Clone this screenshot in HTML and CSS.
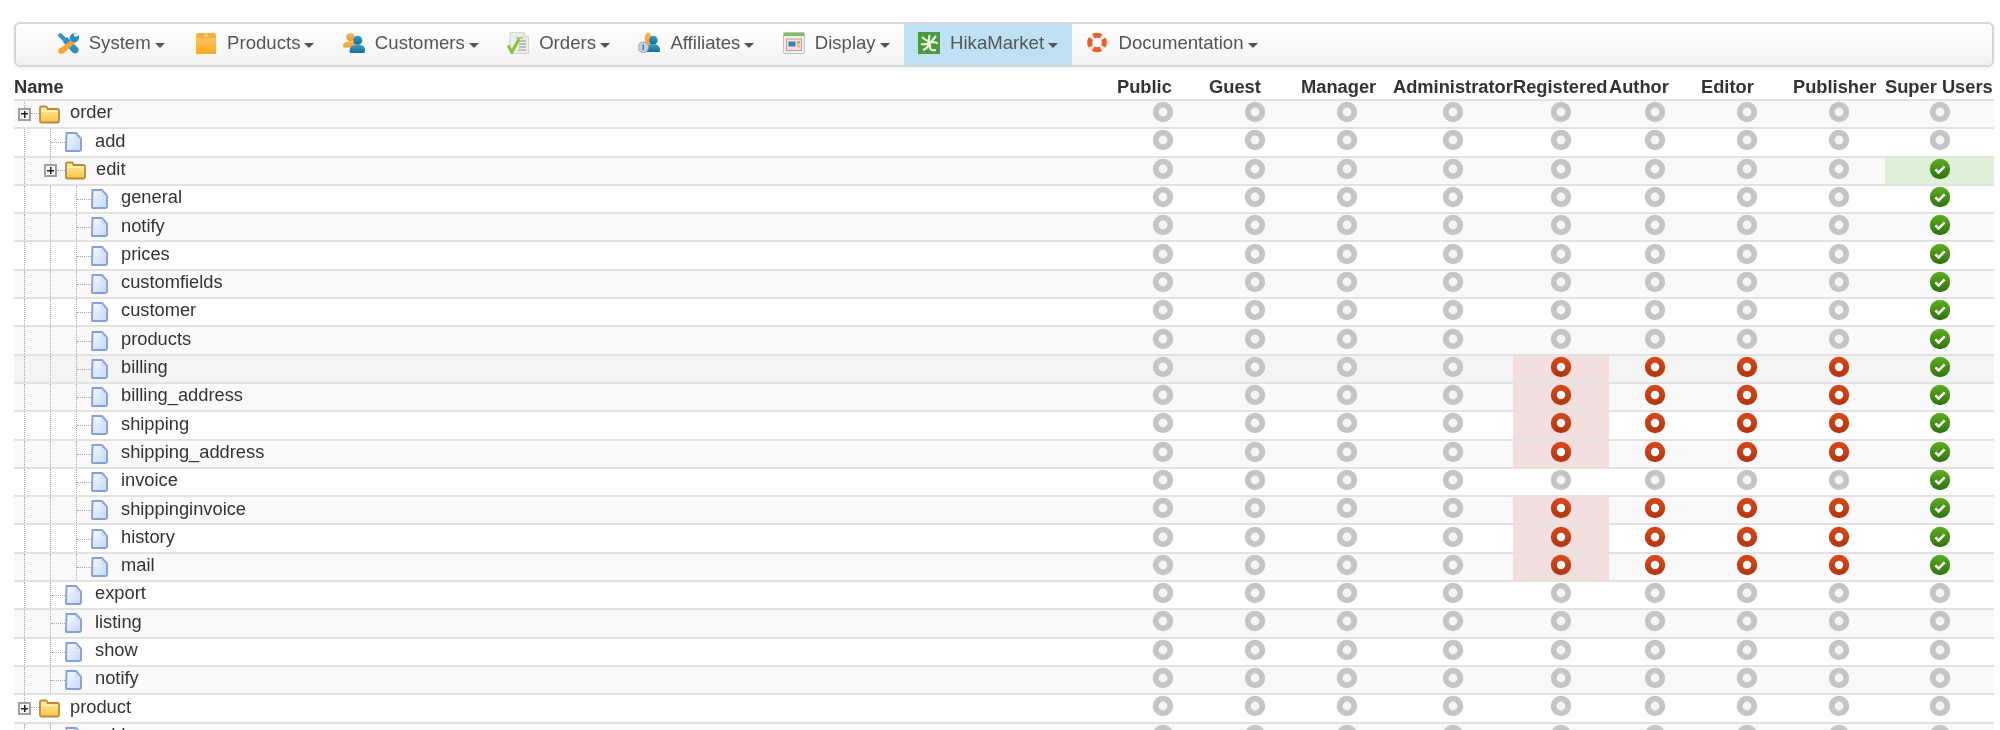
FILE: index.html
```html
<!DOCTYPE html>
<html lang="en">
<head>
<meta charset="utf-8">
<title>HikaMarket ACL</title>
<link rel="stylesheet" href="styles.css">
</head>
<body>
<svg class="defs" aria-hidden="true">
  <defs>
    <linearGradient id="gf" x1="0" y1="0" x2="0" y2="1"><stop offset="0" stop-color="#ffefa8"/><stop offset="1" stop-color="#f9c543"/></linearGradient>
    <linearGradient id="gp" x1="0" y1="0" x2="1" y2="1"><stop offset="0" stop-color="#f8fbff"/><stop offset="1" stop-color="#c3d7f5"/></linearGradient>
    <linearGradient id="gb" x1="0" y1="0" x2="0" y2="1"><stop offset="0" stop-color="#fdc35c"/><stop offset="1" stop-color="#fba81f"/></linearGradient>
    <linearGradient id="gg" x1="0" y1="0" x2="0" y2="1"><stop offset="0" stop-color="#5fae1f"/><stop offset="1" stop-color="#2f7010"/></linearGradient>
    <linearGradient id="gr" x1="0" y1="0" x2="0" y2="1"><stop offset="0" stop-color="#d3461a"/><stop offset="1" stop-color="#b53812"/></linearGradient>
    <linearGradient id="gu" x1="0" y1="0" x2="0" y2="1"><stop offset="0" stop-color="#3aa0c8"/><stop offset="1" stop-color="#17698f"/></linearGradient>
    <linearGradient id="go" x1="0" y1="0" x2="0" y2="1"><stop offset="0" stop-color="#fcb860"/><stop offset="1" stop-color="#f59a2a"/></linearGradient>
    <symbol id="off" viewBox="0 0 22 22"><circle cx="11" cy="11" r="4.500" fill="#f5f5f5"/><circle cx="11" cy="11" r="7.300" fill="none" stroke="#c5c5c5" stroke-width="5.800"/></symbol>
    <symbol id="deny" viewBox="0 0 22 22"><circle cx="11" cy="11" r="4.200" fill="#fff"/><circle cx="11" cy="11" r="7.200" fill="none" stroke="url(#gr)" stroke-width="6"/></symbol>
    <symbol id="ok" viewBox="0 0 22 22"><circle cx="11" cy="11" r="10.200" fill="url(#gg)"/><path d="M6.400 11.300l3.200 3.200 6-6.200" fill="none" stroke="#fff" stroke-width="2.500"/></symbol>
    <symbol id="folder" viewBox="0 0 21 19"><path d="M1 5V3q0-1.500 1.500-1.500h4q1 0 1.500 1l.8 1.500h9.700q1.500 0 1.500 1.500v10.500q0 1.500-1.500 1.500H2.500Q1 17.500 1 16z" fill="url(#gf)" stroke="#bb8a34" stroke-width="1.800"/><path d="M2 6.300h17" stroke="#fff6cc" stroke-width="1"/></symbol>
    <symbol id="page" viewBox="0 0 17 20"><path d="M1.500 1h9.500l5 5.500v11q0 1.500-1.500 1.500h-13Q1 19 1 17.500z" fill="url(#gp)" stroke="#86a0d4" stroke-width="1.900"/><path d="M11 1.500v5h4.600" fill="none" stroke="#c0d0ee" stroke-width=".7"/></symbol>
  </defs>
</svg>

<nav class="menu">
  <a class="item">
    <svg class="ico" viewBox="0 0 22 22"><path d="M4 1l6 6-3 3-6-6q0-3 3-3z" fill="#3a93c4"/><path d="M7 7l3-2 11 11q1.500 3-.5 4.500t-4.500.5L6 10z" fill="#2f8fbf"/><path d="M16 7l3 3L7 21q-3 2-5 0t0-4z" fill="#f4a63a"/><path d="M21 2q-6-2-8 2-1 3 1 5t5 1q4-2 3-7l-3 2-2-1v-2z" fill="#2f8fbf"/></svg>
    <span>System</span><i class="caret"></i>
  </a>
  <a class="item">
    <svg class="ico" viewBox="0 0 22 22"><path d="M1 5q0-4 2-4h16q2 0 2 4v2H1z" fill="#f9ac42"/><path d="M9.500 1h3l.5 4H9z" fill="#fdc76c"/><path d="M1 6h20v15q0 1-1 1H2q-1 0-1-1z" fill="url(#gb)"/></svg>
    <span>Products</span><i class="caret"></i>
  </a>
  <a class="item">
    <svg class="ico" viewBox="0 0 24 22"><circle cx="8" cy="4.500" r="4.500" fill="url(#go)"/><path d="M0 14q0-5 8-5 4 0 6 2v5H1q-1 0-1-2z" fill="url(#go)"/><circle cx="16" cy="8" r="5" fill="url(#gu)"/><path d="M7 20q0-7 9-7t8 7q0 2-1.500 2h-14Q7 22 7 20z" fill="url(#gu)"/></svg>
    <span>Customers</span><i class="caret"></i>
  </a>
  <a class="item">
    <svg class="ico" viewBox="0 0 22 22"><path d="M3 .5h14l4.500 4.500v16.500H3z" fill="#ebede7" stroke="#d2d5cf"/><path d="M17 .5V5h4.500" fill="#f7f8f5" stroke="#c8ccc4"/><path d="M9 6h7M10 9h9M12 12h7M12 15h7M11 18h8" stroke="#adb3aa" stroke-width="1.300"/><path d="M1 13.500l4 6.500 7-13" fill="none" stroke="#8fc23c" stroke-width="3.200"/></svg>
    <span>Orders</span><i class="caret"></i>
  </a>
  <a class="item">
    <svg class="ico" viewBox="0 0 23 22"><path d="M7 6q0-6 4-6 3 0 3 6v10H7z" fill="url(#go)"/><circle cx="16" cy="8" r="4.500" fill="url(#gu)"/><path d="M9 19q0-7 7-7t7 7q0 1.500-1 1.500H10q-1 0-1-1.500z" fill="url(#gu)"/><circle cx="5.500" cy="15.500" r="5.500" fill="#c3d4de" stroke="#8fa7b5"/><path d="M5.500 12.500v6" stroke="#4c7d9b" stroke-width="1.600"/></svg>
    <span>Affiliates</span><i class="caret"></i>
  </a>
  <a class="item">
    <svg class="ico" viewBox="0 0 22 22"><rect x=".5" y=".5" width="21" height="21" rx="1" fill="#eaf0ee" stroke="#b9c4c4"/><rect x="1" y="1" width="20" height="3" fill="#7cc05e"/><rect x="3.500" y="7" width="15" height="11.500" fill="#f6dcdc" stroke="#e28f8f"/><rect x="5.500" y="9.500" width="7" height="5" fill="#2c86bb"/><rect x="14" y="9" width="3" height="3" fill="#f4a53a"/><rect x="14" y="13" width="3" height="2.500" fill="#e9c34a"/></svg>
    <span>Display</span><i class="caret"></i>
  </a>
  <a class="item active">
    <svg class="ico" viewBox="0 0 22 22"><rect width="22" height="23" fill="#4c9a3f"/><path d="M11.500 3q-1 5-.5 9M4 5q3 3 6 4M18 4l-5 6M3 12q4 1 8-1M11 12q-2 5-6 6M12 10q8 0 7 2M12 11v5q1 3 6 2" fill="none" stroke="#eaf5df" stroke-width="2.100"/></svg>
    <span>HikaMarket</span><i class="caret"></i>
  </a>
  <a class="item">
    <svg class="ico" viewBox="0 0 22 22"><circle cx="11" cy="10.500" r="7.300" fill="#fff" stroke="#f3e4da" stroke-width="5"/><circle cx="11" cy="10.500" r="7.300" fill="none" stroke="#e8602a" stroke-width="5" stroke-dasharray="8 3.470" stroke-dashoffset="4"/></svg>
    <span>Documentation</span><i class="caret"></i>
  </a>
</nav>

<table class="acl">
  <colgroup>
    <col class="c-name"><col class="c-92"><col class="c-92"><col class="c-92"><col class="c-120"><col class="c-96"><col class="c-92"><col class="c-92"><col class="c-92"><col class="c-su">
  </colgroup>
  <thead>
    <tr><th>Name</th><th>Public</th><th>Guest</th><th>Manager</th><th>Administrator</th><th>Registered</th><th>Author</th><th>Editor</th><th>Publisher</th><th>Super Users</th></tr>
  </thead>
  <tbody>
    <tr><td><div class="node"><span class="tg"></span><svg class="fo"><use href="#folder"/></svg><span>order</span></div></td><td><svg class="st"><use href="#off"/></svg></td><td><svg class="st"><use href="#off"/></svg></td><td><svg class="st"><use href="#off"/></svg></td><td><svg class="st"><use href="#off"/></svg></td><td><svg class="st"><use href="#off"/></svg></td><td><svg class="st"><use href="#off"/></svg></td><td><svg class="st"><use href="#off"/></svg></td><td><svg class="st"><use href="#off"/></svg></td><td><svg class="st"><use href="#off"/></svg></td></tr>
    <tr><td><div class="node"><span class="g"></span><span class="j"></span><svg class="pg"><use href="#page"/></svg><span>add</span></div></td><td><svg class="st"><use href="#off"/></svg></td><td><svg class="st"><use href="#off"/></svg></td><td><svg class="st"><use href="#off"/></svg></td><td><svg class="st"><use href="#off"/></svg></td><td><svg class="st"><use href="#off"/></svg></td><td><svg class="st"><use href="#off"/></svg></td><td><svg class="st"><use href="#off"/></svg></td><td><svg class="st"><use href="#off"/></svg></td><td><svg class="st"><use href="#off"/></svg></td></tr>
    <tr><td><div class="node"><span class="g"></span><span class="tg"></span><svg class="fo"><use href="#folder"/></svg><span>edit</span></div></td><td><svg class="st"><use href="#off"/></svg></td><td><svg class="st"><use href="#off"/></svg></td><td><svg class="st"><use href="#off"/></svg></td><td><svg class="st"><use href="#off"/></svg></td><td><svg class="st"><use href="#off"/></svg></td><td><svg class="st"><use href="#off"/></svg></td><td><svg class="st"><use href="#off"/></svg></td><td><svg class="st"><use href="#off"/></svg></td><td class="allow"><svg class="st"><use href="#ok"/></svg></td></tr>
    <tr><td><div class="node"><span class="g"></span><span class="g"></span><span class="j"></span><svg class="pg"><use href="#page"/></svg><span>general</span></div></td><td><svg class="st"><use href="#off"/></svg></td><td><svg class="st"><use href="#off"/></svg></td><td><svg class="st"><use href="#off"/></svg></td><td><svg class="st"><use href="#off"/></svg></td><td><svg class="st"><use href="#off"/></svg></td><td><svg class="st"><use href="#off"/></svg></td><td><svg class="st"><use href="#off"/></svg></td><td><svg class="st"><use href="#off"/></svg></td><td><svg class="st"><use href="#ok"/></svg></td></tr>
    <tr><td><div class="node"><span class="g"></span><span class="g"></span><span class="j"></span><svg class="pg"><use href="#page"/></svg><span>notify</span></div></td><td><svg class="st"><use href="#off"/></svg></td><td><svg class="st"><use href="#off"/></svg></td><td><svg class="st"><use href="#off"/></svg></td><td><svg class="st"><use href="#off"/></svg></td><td><svg class="st"><use href="#off"/></svg></td><td><svg class="st"><use href="#off"/></svg></td><td><svg class="st"><use href="#off"/></svg></td><td><svg class="st"><use href="#off"/></svg></td><td><svg class="st"><use href="#ok"/></svg></td></tr>
    <tr><td><div class="node"><span class="g"></span><span class="g"></span><span class="j"></span><svg class="pg"><use href="#page"/></svg><span>prices</span></div></td><td><svg class="st"><use href="#off"/></svg></td><td><svg class="st"><use href="#off"/></svg></td><td><svg class="st"><use href="#off"/></svg></td><td><svg class="st"><use href="#off"/></svg></td><td><svg class="st"><use href="#off"/></svg></td><td><svg class="st"><use href="#off"/></svg></td><td><svg class="st"><use href="#off"/></svg></td><td><svg class="st"><use href="#off"/></svg></td><td><svg class="st"><use href="#ok"/></svg></td></tr>
    <tr><td><div class="node"><span class="g"></span><span class="g"></span><span class="j"></span><svg class="pg"><use href="#page"/></svg><span>customfields</span></div></td><td><svg class="st"><use href="#off"/></svg></td><td><svg class="st"><use href="#off"/></svg></td><td><svg class="st"><use href="#off"/></svg></td><td><svg class="st"><use href="#off"/></svg></td><td><svg class="st"><use href="#off"/></svg></td><td><svg class="st"><use href="#off"/></svg></td><td><svg class="st"><use href="#off"/></svg></td><td><svg class="st"><use href="#off"/></svg></td><td><svg class="st"><use href="#ok"/></svg></td></tr>
    <tr><td><div class="node"><span class="g"></span><span class="g"></span><span class="j"></span><svg class="pg"><use href="#page"/></svg><span>customer</span></div></td><td><svg class="st"><use href="#off"/></svg></td><td><svg class="st"><use href="#off"/></svg></td><td><svg class="st"><use href="#off"/></svg></td><td><svg class="st"><use href="#off"/></svg></td><td><svg class="st"><use href="#off"/></svg></td><td><svg class="st"><use href="#off"/></svg></td><td><svg class="st"><use href="#off"/></svg></td><td><svg class="st"><use href="#off"/></svg></td><td><svg class="st"><use href="#ok"/></svg></td></tr>
    <tr><td><div class="node"><span class="g"></span><span class="g"></span><span class="j"></span><svg class="pg"><use href="#page"/></svg><span>products</span></div></td><td><svg class="st"><use href="#off"/></svg></td><td><svg class="st"><use href="#off"/></svg></td><td><svg class="st"><use href="#off"/></svg></td><td><svg class="st"><use href="#off"/></svg></td><td><svg class="st"><use href="#off"/></svg></td><td><svg class="st"><use href="#off"/></svg></td><td><svg class="st"><use href="#off"/></svg></td><td><svg class="st"><use href="#off"/></svg></td><td><svg class="st"><use href="#ok"/></svg></td></tr>
    <tr class="hover"><td><div class="node"><span class="g"></span><span class="g"></span><span class="j"></span><svg class="pg"><use href="#page"/></svg><span>billing</span></div></td><td><svg class="st"><use href="#off"/></svg></td><td><svg class="st"><use href="#off"/></svg></td><td><svg class="st"><use href="#off"/></svg></td><td><svg class="st"><use href="#off"/></svg></td><td class="denied"><svg class="st"><use href="#deny"/></svg></td><td><svg class="st"><use href="#deny"/></svg></td><td><svg class="st"><use href="#deny"/></svg></td><td><svg class="st"><use href="#deny"/></svg></td><td><svg class="st"><use href="#ok"/></svg></td></tr>
    <tr><td><div class="node"><span class="g"></span><span class="g"></span><span class="j"></span><svg class="pg"><use href="#page"/></svg><span>billing_address</span></div></td><td><svg class="st"><use href="#off"/></svg></td><td><svg class="st"><use href="#off"/></svg></td><td><svg class="st"><use href="#off"/></svg></td><td><svg class="st"><use href="#off"/></svg></td><td class="denied"><svg class="st"><use href="#deny"/></svg></td><td><svg class="st"><use href="#deny"/></svg></td><td><svg class="st"><use href="#deny"/></svg></td><td><svg class="st"><use href="#deny"/></svg></td><td><svg class="st"><use href="#ok"/></svg></td></tr>
    <tr><td><div class="node"><span class="g"></span><span class="g"></span><span class="j"></span><svg class="pg"><use href="#page"/></svg><span>shipping</span></div></td><td><svg class="st"><use href="#off"/></svg></td><td><svg class="st"><use href="#off"/></svg></td><td><svg class="st"><use href="#off"/></svg></td><td><svg class="st"><use href="#off"/></svg></td><td class="denied"><svg class="st"><use href="#deny"/></svg></td><td><svg class="st"><use href="#deny"/></svg></td><td><svg class="st"><use href="#deny"/></svg></td><td><svg class="st"><use href="#deny"/></svg></td><td><svg class="st"><use href="#ok"/></svg></td></tr>
    <tr><td><div class="node"><span class="g"></span><span class="g"></span><span class="j"></span><svg class="pg"><use href="#page"/></svg><span>shipping_address</span></div></td><td><svg class="st"><use href="#off"/></svg></td><td><svg class="st"><use href="#off"/></svg></td><td><svg class="st"><use href="#off"/></svg></td><td><svg class="st"><use href="#off"/></svg></td><td class="denied"><svg class="st"><use href="#deny"/></svg></td><td><svg class="st"><use href="#deny"/></svg></td><td><svg class="st"><use href="#deny"/></svg></td><td><svg class="st"><use href="#deny"/></svg></td><td><svg class="st"><use href="#ok"/></svg></td></tr>
    <tr><td><div class="node"><span class="g"></span><span class="g"></span><span class="j"></span><svg class="pg"><use href="#page"/></svg><span>invoice</span></div></td><td><svg class="st"><use href="#off"/></svg></td><td><svg class="st"><use href="#off"/></svg></td><td><svg class="st"><use href="#off"/></svg></td><td><svg class="st"><use href="#off"/></svg></td><td><svg class="st"><use href="#off"/></svg></td><td><svg class="st"><use href="#off"/></svg></td><td><svg class="st"><use href="#off"/></svg></td><td><svg class="st"><use href="#off"/></svg></td><td><svg class="st"><use href="#ok"/></svg></td></tr>
    <tr><td><div class="node"><span class="g"></span><span class="g"></span><span class="j"></span><svg class="pg"><use href="#page"/></svg><span>shippinginvoice</span></div></td><td><svg class="st"><use href="#off"/></svg></td><td><svg class="st"><use href="#off"/></svg></td><td><svg class="st"><use href="#off"/></svg></td><td><svg class="st"><use href="#off"/></svg></td><td class="denied"><svg class="st"><use href="#deny"/></svg></td><td><svg class="st"><use href="#deny"/></svg></td><td><svg class="st"><use href="#deny"/></svg></td><td><svg class="st"><use href="#deny"/></svg></td><td><svg class="st"><use href="#ok"/></svg></td></tr>
    <tr><td><div class="node"><span class="g"></span><span class="g"></span><span class="j"></span><svg class="pg"><use href="#page"/></svg><span>history</span></div></td><td><svg class="st"><use href="#off"/></svg></td><td><svg class="st"><use href="#off"/></svg></td><td><svg class="st"><use href="#off"/></svg></td><td><svg class="st"><use href="#off"/></svg></td><td class="denied"><svg class="st"><use href="#deny"/></svg></td><td><svg class="st"><use href="#deny"/></svg></td><td><svg class="st"><use href="#deny"/></svg></td><td><svg class="st"><use href="#deny"/></svg></td><td><svg class="st"><use href="#ok"/></svg></td></tr>
    <tr><td><div class="node"><span class="g"></span><span class="g"></span><span class="j"></span><svg class="pg"><use href="#page"/></svg><span>mail</span></div></td><td><svg class="st"><use href="#off"/></svg></td><td><svg class="st"><use href="#off"/></svg></td><td><svg class="st"><use href="#off"/></svg></td><td><svg class="st"><use href="#off"/></svg></td><td class="denied"><svg class="st"><use href="#deny"/></svg></td><td><svg class="st"><use href="#deny"/></svg></td><td><svg class="st"><use href="#deny"/></svg></td><td><svg class="st"><use href="#deny"/></svg></td><td><svg class="st"><use href="#ok"/></svg></td></tr>
    <tr><td><div class="node"><span class="g"></span><span class="j"></span><svg class="pg"><use href="#page"/></svg><span>export</span></div></td><td><svg class="st"><use href="#off"/></svg></td><td><svg class="st"><use href="#off"/></svg></td><td><svg class="st"><use href="#off"/></svg></td><td><svg class="st"><use href="#off"/></svg></td><td><svg class="st"><use href="#off"/></svg></td><td><svg class="st"><use href="#off"/></svg></td><td><svg class="st"><use href="#off"/></svg></td><td><svg class="st"><use href="#off"/></svg></td><td><svg class="st"><use href="#off"/></svg></td></tr>
    <tr><td><div class="node"><span class="g"></span><span class="j"></span><svg class="pg"><use href="#page"/></svg><span>listing</span></div></td><td><svg class="st"><use href="#off"/></svg></td><td><svg class="st"><use href="#off"/></svg></td><td><svg class="st"><use href="#off"/></svg></td><td><svg class="st"><use href="#off"/></svg></td><td><svg class="st"><use href="#off"/></svg></td><td><svg class="st"><use href="#off"/></svg></td><td><svg class="st"><use href="#off"/></svg></td><td><svg class="st"><use href="#off"/></svg></td><td><svg class="st"><use href="#off"/></svg></td></tr>
    <tr><td><div class="node"><span class="g"></span><span class="j"></span><svg class="pg"><use href="#page"/></svg><span>show</span></div></td><td><svg class="st"><use href="#off"/></svg></td><td><svg class="st"><use href="#off"/></svg></td><td><svg class="st"><use href="#off"/></svg></td><td><svg class="st"><use href="#off"/></svg></td><td><svg class="st"><use href="#off"/></svg></td><td><svg class="st"><use href="#off"/></svg></td><td><svg class="st"><use href="#off"/></svg></td><td><svg class="st"><use href="#off"/></svg></td><td><svg class="st"><use href="#off"/></svg></td></tr>
    <tr><td><div class="node"><span class="g"></span><span class="j"></span><svg class="pg"><use href="#page"/></svg><span>notify</span></div></td><td><svg class="st"><use href="#off"/></svg></td><td><svg class="st"><use href="#off"/></svg></td><td><svg class="st"><use href="#off"/></svg></td><td><svg class="st"><use href="#off"/></svg></td><td><svg class="st"><use href="#off"/></svg></td><td><svg class="st"><use href="#off"/></svg></td><td><svg class="st"><use href="#off"/></svg></td><td><svg class="st"><use href="#off"/></svg></td><td><svg class="st"><use href="#off"/></svg></td></tr>
    <tr><td><div class="node"><span class="tg"></span><svg class="fo"><use href="#folder"/></svg><span>product</span></div></td><td><svg class="st"><use href="#off"/></svg></td><td><svg class="st"><use href="#off"/></svg></td><td><svg class="st"><use href="#off"/></svg></td><td><svg class="st"><use href="#off"/></svg></td><td><svg class="st"><use href="#off"/></svg></td><td><svg class="st"><use href="#off"/></svg></td><td><svg class="st"><use href="#off"/></svg></td><td><svg class="st"><use href="#off"/></svg></td><td><svg class="st"><use href="#off"/></svg></td></tr>
    <tr><td><div class="node"><span class="g"></span><span class="j"></span><svg class="pg"><use href="#page"/></svg><span>add</span></div></td><td><svg class="st"><use href="#off"/></svg></td><td><svg class="st"><use href="#off"/></svg></td><td><svg class="st"><use href="#off"/></svg></td><td><svg class="st"><use href="#off"/></svg></td><td><svg class="st"><use href="#off"/></svg></td><td><svg class="st"><use href="#off"/></svg></td><td><svg class="st"><use href="#off"/></svg></td><td><svg class="st"><use href="#off"/></svg></td><td><svg class="st"><use href="#off"/></svg></td></tr>
  </tbody>
</table>
</body>
</html>
```

FILE: styles.css
```css
html { overflow: hidden; height: 100%; }
body {
  margin: 0;
  padding: 22px 6px 0 14px;
  background: #fff;
  color: #333;
  font-family: "Liberation Sans", Arial, sans-serif;
  font-size: 18.3px;
  filter: blur(0.5px);
}
.defs { position: absolute; width: 0; height: 0; }

/* menu bar */
.menu {
  display: flex;
  height: 45px;
  box-sizing: border-box;
  padding-left: 26.700px;
  border: 2px solid #d6d6d6;
  border-radius: 6px;
  background: linear-gradient(#fff, #f2f2f2);
  box-shadow: 0 1px 4px rgba(0, 0, 0, .07);
  font-size: 18.6px;
}
.item {
  display: flex;
  align-items: center;
  padding: 0 12px 3px 14px;
  color: #555;
}
.item:first-child { padding-right: 14px; }
.item + .item { margin-left: 2.400px; }
.item.active + .item { margin-left: 0; }
.item.active { background: #bee1f4; padding-right: 14.400px; }
.ico { width: 22px; height: 22px; margin-right: 10px; flex: none; }
.caret {
  width: 0;
  height: 0;
  margin: 4px 0 0 4px;
  border-top: 5px solid #555;
  border-left: 5.500px solid transparent;
  border-right: 5.500px solid transparent;
}

/* permissions table */
.acl {
  width: 1980px;
  margin-top: 3px;
  table-layout: fixed;
  border-collapse: separate;
  border-spacing: 0;
}
.c-name { width: 1103px; }
.c-92 { width: 92px; }
.c-120 { width: 120px; }
.c-96 { width: 96px; }
.c-su { width: 109px; }

.acl th {
  height: 29px;
  box-sizing: border-box;
  padding: 4px 0 0;
  font-weight: bold;
  text-align: left;
  white-space: nowrap;
}
.acl td {
  height: 28.300px;
  box-sizing: border-box;
  padding: 0;
  border-top: 2px solid #e2e2e2;
  text-align: center;
  vertical-align: middle;
}
.acl tbody tr:nth-child(odd) td { background: #f9f9f9; }
.acl tbody tr.hover td { background: #f4f4f4; }
.acl tbody tr td.denied { background: #f2dede; }
.acl tbody tr td.allow { background: #dff0d8; }

.st { display: block; width: 22px; height: 22px; margin: -3px auto 1px; }

/* tree column */
.node {
  display: flex;
  align-items: center;
  height: 26.300px;
  padding-left: 10px;
  text-align: left;
}
.node > span:last-child { margin-bottom: 3.500px; }
.g, .j {
  flex: none;
  align-self: stretch;
  box-sizing: border-box;
  border-left: 1px dotted #a8a8a8;
}
.g { width: 26px; }
.j { position: relative; width: 15px; }
.j::after {
  content: "";
  position: absolute;
  left: 0;
  right: 0;
  top: 50%;
  border-top: 1px dotted #a8a8a8;
}
.tg {
  flex: none;
  position: relative;
  box-sizing: border-box;
  width: 13px;
  height: 13px;
  margin: 0 8px 0 -6px;
  border: 2px solid #a0a0a0;
  background:
    linear-gradient(#222, #222) center / 7px 1.500px no-repeat,
    linear-gradient(#222, #222) center / 1.500px 7px no-repeat,
    #f6f6f6;
}
.tg::after {
  content: "";
  position: absolute;
  left: 11px;
  top: 3.500px;
  width: 8px;
  border-top: 1px dotted #a8a8a8;
}
.tg::before {
  content: "";
  position: absolute;
  left: 3.500px;
  top: -9px;
  height: 7px;
  border-left: 1px dotted #a8a8a8;
}
.fo { flex: none; width: 21px; height: 19px; margin-right: 10px; }
.pg { flex: none; width: 17px; height: 20px; margin-right: 13px; }
```
